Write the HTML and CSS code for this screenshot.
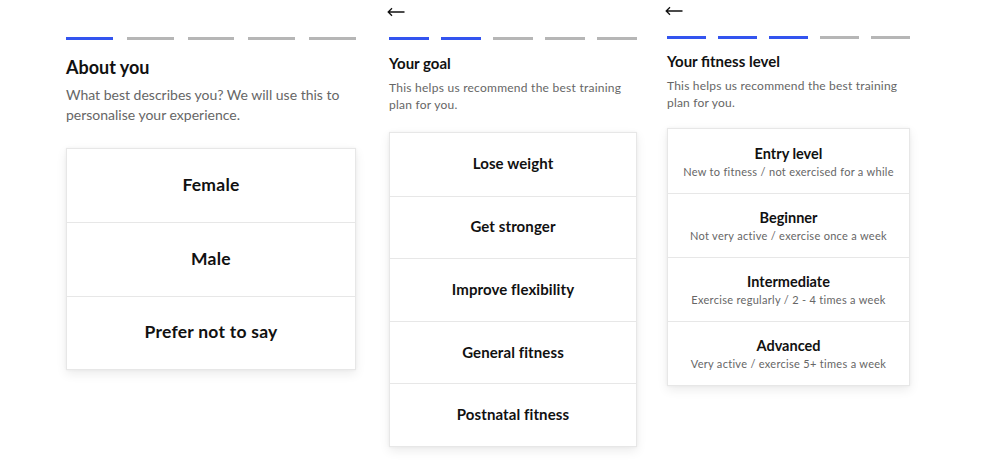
FILE: index.html
```html
<!DOCTYPE html>
<html lang="en">
<head>
<meta charset="utf-8">
<title>Onboarding</title>
<link rel="stylesheet" href="styles.css">
</head>
<body>
<div class="screens">
  <section class="panel panel-lg">
    <div class="nav"></div>
    <div class="steps">
      <span class="step on"></span><span class="step"></span><span class="step"></span><span class="step"></span><span class="step"></span>
    </div>
    <h2 class="title">About you</h2>
    <p class="sub">What best describes you? We will use this to personalise your experience.</p>
    <div class="card">
      <div class="row"><span class="label">Female</span></div>
      <div class="row"><span class="label">Male</span></div>
      <div class="row"><span class="label">Prefer not to say</span></div>
    </div>
  </section>

  <section class="panel panel-md">
    <div class="nav">
      <svg class="back" width="18" height="10" viewBox="0 0 18 10"><path d="M17.5 5H1.2M5 1.3L1.2 5L5 8.7" fill="none" stroke="#111" stroke-width="1.3"/></svg>
    </div>
    <div class="steps">
      <span class="step on"></span><span class="step on"></span><span class="step"></span><span class="step"></span><span class="step"></span>
    </div>
    <h2 class="title">Your goal</h2>
    <p class="sub">This helps us recommend the best training plan for you.</p>
    <div class="card">
      <div class="row"><span class="label">Lose weight</span></div>
      <div class="row"><span class="label">Get stronger</span></div>
      <div class="row"><span class="label">Improve flexibility</span></div>
      <div class="row"><span class="label">General fitness</span></div>
      <div class="row"><span class="label">Postnatal fitness</span></div>
    </div>
  </section>

  <section class="panel panel-sm">
    <div class="nav">
      <svg class="back" width="18" height="10" viewBox="0 0 18 10"><path d="M17.5 5H1.2M5 1.3L1.2 5L5 8.7" fill="none" stroke="#111" stroke-width="1.3"/></svg>
    </div>
    <div class="steps">
      <span class="step on"></span><span class="step on"></span><span class="step on"></span><span class="step"></span><span class="step"></span>
    </div>
    <h2 class="title">Your fitness level</h2>
    <p class="sub">This helps us recommend the best training plan for you.</p>
    <div class="card">
      <div class="row"><span class="label">Entry level</span><span class="hint">New to fitness / not exercised for a while</span></div>
      <div class="row"><span class="label">Beginner</span><span class="hint">Not very active / exercise once a week</span></div>
      <div class="row"><span class="label">Intermediate</span><span class="hint">Exercise regularly / 2 - 4 times a week</span></div>
      <div class="row"><span class="label">Advanced</span><span class="hint">Very active / exercise 5+ times a week</span></div>
    </div>
  </section>
</div>
</body>
</html>
```
FILE: styles.css
```css
* { box-sizing: border-box; }
html, body {
  margin: 0;
  padding: 0;
  background: #fff;
}
body {
  font-family: "Lato", "Noto Sans", sans-serif;
  color: #111;
  width: 1000px;
  height: 469px;
  overflow: hidden;
}
.screens {
  display: flex;
  align-items: flex-start;
  padding-left: 66px;
}
.panel { display: flex; flex-direction: column; }
.nav { display: flex; align-items: center; }
.back { display: block; }
.steps { display: flex; }
.step { flex: 1; height: 3px; background: #b6b6b6; }
.step.on { background: #3354ef; }
.title { margin: 0; font-weight: 700; }
.sub { margin: 0; color: #666; }
.card {
  background: #fff;
  border: 1px solid #e7e7e7;
  box-shadow: 0 4px 10px rgba(0, 0, 0, 0.08), 0 0 3px rgba(0, 0, 0, 0.05);
  display: flex;
  flex-direction: column;
}
.row {
  display: flex;
  flex-direction: column;
  align-items: center;
  justify-content: center;
  border-top: 1px solid #e7e7e7;
}
.row:first-child { border-top: none; }
.label { font-weight: 700; }
.hint { color: #666; }

/* Screen 1 */
.panel-lg { width: 290px; }
.panel-lg .nav { height: 37px; }
.panel-lg .steps { gap: 14px; }
.panel-lg .title { font-size: 18px; line-height: 22px; margin-top: 16px; }
.panel-lg .sub { font-size: 14px; line-height: 20px; margin-top: 7px; }
.panel-lg .card { margin-top: 22.5px; }
.panel-lg .row { height: 73.5px; padding-bottom: 2px; }
.panel-lg .label { font-size: 17.5px; letter-spacing: 0.25px; }

/* Screen 2 */
.panel-md { width: 248px; margin-left: 33px; }
.panel-md .nav { height: 24px; margin-left: -2px; margin-bottom: 13px; }
.panel-md .steps { gap: 11.5px; }
.panel-md .title { font-size: 15px; line-height: 18px; margin-top: 14px; }
.panel-md .sub { font-size: 12px; line-height: 17px; margin-top: 7px; letter-spacing: 0.25px; max-width: 235px; }
.panel-md .card { margin-top: 19px; }
.panel-md .row { height: 62.6px; padding-bottom: 2px; }
.panel-md .label { font-size: 15px; letter-spacing: 0.1px; }

/* Screen 3 */
.panel-sm { width: 243px; margin-left: 30px; }
.panel-sm .nav { height: 22px; margin-left: -2px; margin-bottom: 13.5px; }
.panel-sm .steps { gap: 11.5px; }
.panel-sm .title { font-size: 15px; line-height: 18px; margin-top: 13px; }
.panel-sm .sub { font-size: 12px; line-height: 17px; margin-top: 7px; letter-spacing: 0.2px; max-width: 236px; }
.panel-sm .card { margin-top: 17.5px; }
.panel-sm .row { height: 64px; padding-top: 1px; }
.panel-sm .label { font-size: 14.5px; line-height: 17px; }
.panel-sm .hint { font-size: 11px; line-height: 14px; margin-top: 3px; letter-spacing: 0.3px; }
```
